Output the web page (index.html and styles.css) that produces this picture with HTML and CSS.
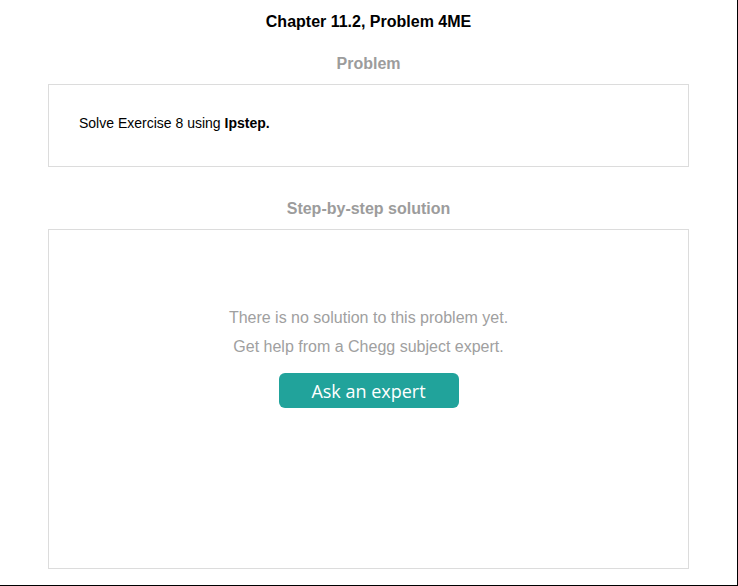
FILE: index.html
```html
<!DOCTYPE html>
<html>
<head>
<meta charset="utf-8">
<link rel="stylesheet" href="styles.css">
</head>
<body>
<div class="page">
  <h1 class="title">Chapter 11.2, Problem 4ME</h1>
  <h2 class="section-label">Problem</h2>
  <div class="card problem-card">
    <p class="problem-text">Solve Exercise 8 using <b>Ipstep.</b></p>
  </div>
  <h2 class="section-label solution-label">Step-by-step solution</h2>
  <div class="card solution-card">
    <p class="empty-line">There is no solution to this problem yet.</p>
    <p class="empty-line">Get help from a Chegg subject expert.</p>
    <button class="ask-btn">Ask an expert</button>
  </div>
</div>
</body>
</html>
```
FILE: styles.css
```css
html, body {
  margin: 0;
  padding: 0;
  background: #fff;
}
body {
  font-family: "Liberation Sans", Arial, sans-serif;
  color: #000;
}
.page {
  box-sizing: border-box;
  width: 738px;
  height: 586px;
  border-right: 1px solid #000;
  border-bottom: 1px solid #000;
  padding: 13px 48px 0 48px;
  display: flex;
  flex-direction: column;
  align-items: stretch;
}
.title {
  margin: 0;
  font-size: 16px;
  line-height: 18px;
  font-weight: bold;
  text-align: center;
}
.section-label {
  margin: 24px 0 11px;
  font-size: 16px;
  line-height: 18px;
  font-weight: bold;
  color: #9c9c9c;
  text-align: center;
}
.solution-label {
  margin-top: 33px;
}
.card {
  box-sizing: border-box;
  border: 1px solid #dcdcdc;
  background: #fff;
}
.problem-card {
  height: 83px;
  padding: 30px 30px 0;
}
.problem-text {
  margin: 0;
  font-size: 14px;
  line-height: 16px;
}
.solution-card {
  height: 340px;
  padding-top: 73px;
  display: flex;
  flex-direction: column;
  align-items: center;
}
.empty-line {
  margin: 0;
  font-size: 16px;
  line-height: 29px;
  color: #a0a0a0;
}
.ask-btn {
  margin-top: 12px;
  width: 180px;
  height: 35px;
  border: none;
  border-radius: 6px;
  background: #21a39b;
  color: #fff;
  font-family: "Open Sans", sans-serif;
  font-size: 18px;
  padding: 0;
  cursor: pointer;
}
```
